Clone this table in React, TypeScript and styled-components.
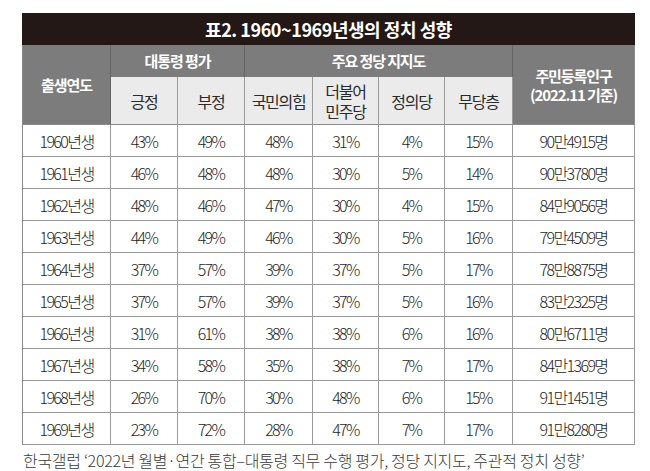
import React from "react";
import styled, { createGlobalStyle } from "styled-components";

const Global = createGlobalStyle`
  html, body { margin: 0; padding: 0; background: #ffffff; }
  body { font-family: "Noto Sans CJK KR", "Noto Sans", sans-serif; }
`;

const Page = styled.div`
  width: 650px;
  height: 471px;
  padding: 13px 0 0 22px;
  box-sizing: border-box;
  background: #ffffff;
`;

const Grid = styled.div`
  display: grid;
  grid-template-columns: 88px 67px 67px 68px 66px 66px 68px 122px;
  grid-template-rows: 32px 32px 48px repeat(10, 32px);
  width: 612px;
  box-sizing: border-box;
  border-left: 1px solid #8a8a8a;
`;

const Title = styled.div`
  grid-column: 1 / span 8;
  background: #231815;
  color: #ffffff;
  font-weight: 700;
  font-size: 18px;
  letter-spacing: -0.45px;
  display: flex;
  align-items: center;
  justify-content: center;
  margin-left: -1px;
`;

const HeadCell = styled.div<{ $col: string; $row: string; $last?: boolean }>`
  grid-column: ${(p) => p.$col};
  grid-row: ${(p) => p.$row};
  background: #7c7c7c;
  color: #ffffff;
  font-weight: 700;
  font-size: 15px;
  letter-spacing: -1.1px;
  line-height: 19px;
  text-align: center;
  display: flex;
  flex-direction: column;
  align-items: center;
  justify-content: center;
  box-sizing: border-box;
  border-right: 1px solid ${(p) => (p.$last ? "#8a8a8a" : "#656565")};
  border-bottom: 1px solid #8a8a8a;
`;

const GroupCell = styled(HeadCell)`
  border-bottom: none;
  padding-bottom: 1px;
`;

const SubCell = styled.div<{ $col: number }>`
  grid-column: ${(p) => p.$col};
  grid-row: 3;
  background: #ebebeb;
  color: #2a2a2a;
  font-size: 16px;
  letter-spacing: -1.3px;
  line-height: 20px;
  text-align: center;
  display: flex;
  flex-direction: column;
  align-items: center;
  justify-content: center;
  box-sizing: border-box;
  border-right: 1px solid #9a9a9a;
  border-bottom: 1px solid #8a8a8a;
`;

const DataCell = styled.div`
  background: #ffffff;
  color: #1e1e1e;
  font-size: 16px;
  font-weight: 300;
  letter-spacing: -1.6px;
  display: flex;
  align-items: center;
  justify-content: center;
  box-sizing: border-box;
  border-right: 1px solid #9a9a9a;
  border-bottom: 1px solid #9a9a9a;
`;

const Footer = styled.div`
  margin-top: 5px;
  margin-left: 1px;
  font-size: 16px;
  font-weight: 300;
  letter-spacing: -0.3px;
  color: #3a3a3a;
  line-height: 20px;
  white-space: nowrap;
`;

const rows: string[][] = [
  ["1960년생", "43%", "49%", "48%", "31%", "4%", "15%", "90만4915명"],
  ["1961년생", "46%", "48%", "48%", "30%", "5%", "14%", "90만3780명"],
  ["1962년생", "48%", "46%", "47%", "30%", "4%", "15%", "84만9056명"],
  ["1963년생", "44%", "49%", "46%", "30%", "5%", "16%", "79만4509명"],
  ["1964년생", "37%", "57%", "39%", "37%", "5%", "17%", "78만8875명"],
  ["1965년생", "37%", "57%", "39%", "37%", "5%", "16%", "83만2325명"],
  ["1966년생", "31%", "61%", "38%", "38%", "6%", "16%", "80만6711명"],
  ["1967년생", "34%", "58%", "35%", "38%", "7%", "17%", "84만1369명"],
  ["1968년생", "26%", "70%", "30%", "48%", "6%", "15%", "91만1451명"],
  ["1969년생", "23%", "72%", "28%", "47%", "7%", "17%", "91만8280명"],
];

export default function App() {
  return (
    <Page>
      <Global />
      <Grid>
        <Title>표2. 1960~1969년생의 정치 성향</Title>
        <HeadCell $col="1" $row="2 / span 2">출생연도</HeadCell>
        <GroupCell $col="2 / span 2" $row="2">대통령 평가</GroupCell>
        <GroupCell $col="4 / span 4" $row="2">주요 정당 지지도</GroupCell>
        <HeadCell $col="8" $row="2 / span 2" $last>
          <span>주민등록인구</span>
          <span>(2022.11 기준)</span>
        </HeadCell>
        <SubCell $col={2}>긍정</SubCell>
        <SubCell $col={3}>부정</SubCell>
        <SubCell $col={4}>국민의힘</SubCell>
        <SubCell $col={5}>
          <span>더불어</span>
          <span>민주당</span>
        </SubCell>
        <SubCell $col={6}>정의당</SubCell>
        <SubCell $col={7}>무당층</SubCell>
        {rows.map((r) =>
          r.map((v, i) => <DataCell key={r[0] + i}>{v}</DataCell>)
        )}
      </Grid>
      <Footer>
        한국갤럽 ‘2022년 월별·연간 통합–대통령 직무 수행 평가, 정당 지지도, 주관적 정치 성향’
      </Footer>
    </Page>
  );
}
